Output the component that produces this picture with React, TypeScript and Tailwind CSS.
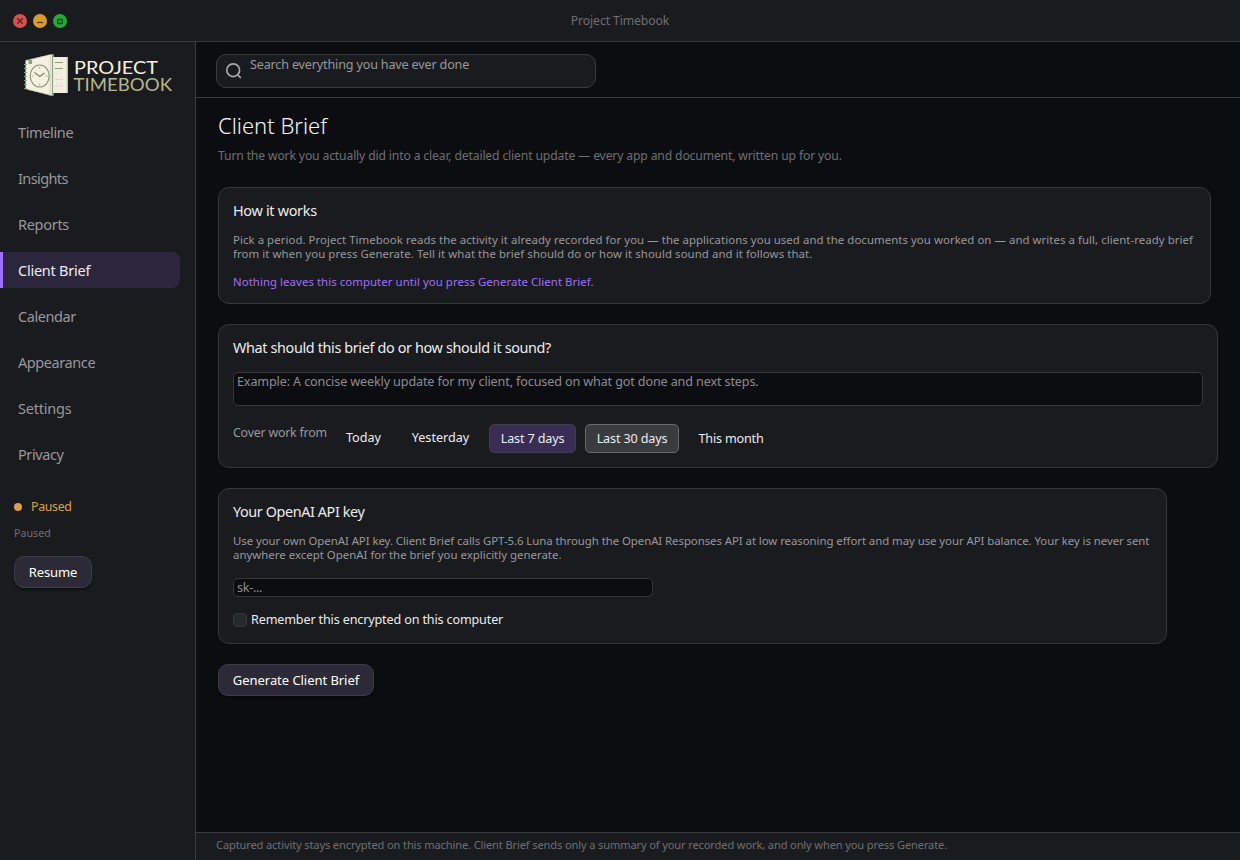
import { useState } from 'react';
import clsx from 'clsx';

interface NavItem {
  label: string;
  tracking: string;
}

const navItems: NavItem[] = [
  { label: 'Timeline', tracking: 'tracking-[-0.36px]' },
  { label: 'Insights', tracking: 'tracking-[-0.6px]' },
  { label: 'Reports', tracking: 'tracking-[-0.3px]' },
  { label: 'Client Brief', tracking: 'tracking-[-0.24px]' },
  { label: 'Calendar', tracking: 'tracking-[-0.42px]' },
  { label: 'Appearance', tracking: 'tracking-[-0.42px]' },
  { label: 'Settings', tracking: 'tracking-[-0.22px]' },
  { label: 'Privacy', tracking: 'tracking-[-0.4px]' }
];

function WindowControls() {
  return (
    <svg width="60" height="16" viewBox="0 0 60 16" className="ml-3">
      <circle cx="8" cy="8" r="7" fill="#d6504d" />
      <path d="M5.3 5.3l5.4 5.4M10.7 5.3l-5.4 5.4" stroke="#55292c" strokeWidth="1.5" />
      <circle cx="28" cy="8" r="7" fill="#d79c2c" />
      <path d="M25 9.5h6" stroke="#5a4420" strokeWidth="1.3" />
      <circle cx="48" cy="8" r="7" fill="#26a83a" />
      <rect x="45.7" y="6.5" width="4.6" height="4" rx="0.6" fill="none" stroke="#174a22" strokeWidth="1.3" />
    </svg>
  );
}

function Logo() {
  return (
    <svg width="150" height="44" viewBox="0 0 150 44" className="mt-[11px] ml-[24px]">
      {/* back pages */}
      <path d="M29 4h15v36H29z" fill="#f4eee0" />
      <path d="M43.3 4v36" stroke="#a3af8d" strokeWidth="1" />
      <path d="M31 9.5h8M31 15.5h8" stroke="#8ba07a" strokeWidth="1.2" />
      <path d="M31 26.5h8M31 33h8" stroke="#d9d8c0" strokeWidth="1" />
      <path d="M32 21h1M36 19h1M32 30h1M36 30h1" stroke="#dcdac6" strokeWidth="1" />
      {/* cover */}
      <path d="M1.5 7.5L26 1.5h3.5v41H27L1.5 36z" fill="#f6f0e2" />
      <path d="M1.5 7.5L27 1.5M27 42.5L1.5 36" stroke="#a9b392" strokeWidth="0.8" strokeDasharray="3 2" />
      <path d="M26.2 2v40" stroke="#c9cbb0" strokeWidth="0.8" />
      <path d="M28.5 1v42" stroke="#8ca27b" strokeWidth="1.2" />
      <path d="M4.5 7h3.5v4H4.5z" fill="#8ca27b" />
      <path d="M0 11.5h3M0 15.5h3M0 19.5h3M0 23.5h3M0 27.5h3M0 31.5h3M0 35.5h3" stroke="#94a583" strokeWidth="1.1" />
      {/* clock */}
      <ellipse cx="15.7" cy="23" rx="9.5" ry="11" fill="none" stroke="#87997a" strokeWidth="1.2" />
      <path d="M10.5 19.5l5.3 4L20.5 20" fill="none" stroke="#75896a" strokeWidth="1.1" />
      <path d="M15.7 14v2M15.7 30.5v2M8 23h1.5M22 23h1.5" stroke="#a3b093" strokeWidth="1" />
      <text x="50" y="21" textLength="84" lengthAdjust="spacingAndGlyphs" className="font-['Lato',sans-serif] text-[18px]" fill="#f6f0e2">
        PROJECT
      </text>
      <text x="49.5" y="38" textLength="98.5" lengthAdjust="spacingAndGlyphs" className="font-['Lato',sans-serif] text-[18px]" fill="#b3b78f">
        TIMEBOOK
      </text>
    </svg>
  );
}

function Sidebar() {
  const [active, setActive] = useState('Client Brief');

  return (
    <aside className="flex w-[196px] shrink-0 flex-col border-r border-[#3a3b3e] bg-[#1a1b1e]">
      <Logo />
      <nav className="mt-[17px] flex flex-col gap-2.5">
        {navItems.map((item) => (
          <button
            key={item.label}
            onClick={() => setActive(item.label)}
            className={clsx(
              'h-9 w-[180px] border-l-[3px] pl-[15px] text-left text-[14.5px] leading-[37px]',
              item.tracking,
              item.label === active
                ? 'rounded-r-lg border-[#a06fff] bg-[#2c263c] text-[#ececf0]'
                : 'border-transparent text-[#98989d]'
            )}
          >
            {item.label}
          </button>
        ))}
      </nav>
      <div className="mt-[25px] ml-3.5 flex h-5 items-center gap-[9px] text-[12.4px] tracking-[-0.35px] text-[#dba04a]">
        <span className="h-2 w-2 rounded-full bg-[#dba04a]" />
        Paused
      </div>
      <p className="mt-2 ml-3.5 text-[10.7px] leading-[16px] text-[#6e6f73]">Paused</p>
      <button className="mt-[15px] ml-3.5 h-8 w-[78px] rounded-[10px] border border-[#3e3d47] bg-[#2b2a36] pt-0.5 text-[13px] tracking-[-0.15px] text-white shadow-[0_2px_2px_rgba(0,0,0,0.4)]">
        Resume
      </button>
    </aside>
  );
}

function SearchBar() {
  return (
    <div className="flex h-14 shrink-0 items-center border-b border-[#3a3b3e] pt-0.5 pl-5">
      <div className="flex h-[34px] w-[380px] items-start rounded-[10px] border border-[#3a3b3e] bg-[#1a1b1e] pl-2">
        <svg width="18" height="18" viewBox="0 0 18 18" className="mt-[7px]" fill="none" stroke="#a6a6ab" strokeWidth="1.7">
          <circle cx="8.2" cy="8.2" r="6.4" />
          <path d="M12.8 12.8l3 3" />
        </svg>
        <span className="ml-[7px] text-[12.6px] leading-[20px] tracking-[-0.17px] text-[#98989d]">Search everything you have ever done</span>
      </div>
    </div>
  );
}

interface PeriodOption {
  label: string;
  className: string;
}

const periods: PeriodOption[] = [
  { label: 'Today', className: 'mt-px w-[59px] h-[27px] border-transparent' },
  { label: 'Yesterday', className: 'mt-px ml-[7px] w-[81px] h-[27px] border-transparent' },
  { label: 'Last 7 days', className: 'ml-[8px] w-[87px] h-[29px] pt-0.5 tracking-[-0.15px] border-[#413c4f] bg-[#392d55]' },
  { label: 'Last 30 days', className: 'ml-[9px] w-[94px] h-[29px] pt-0.5 tracking-[-0.15px] border-[#696b6f] bg-[#393b3f]' },
  { label: 'This month', className: 'ml-[8px] w-[88px] h-[29px] pt-0.5 tracking-[-0.18px] border-transparent' }
];

function HowItWorks() {
  return (
    <section className="mt-[21px] h-[117px] w-[993px] rounded-[11px] border border-[#36373a] bg-[#1a1b1e] px-3.5">
      <h2 className="mt-3 text-[14.4px] leading-[22px] tracking-[-0.3px] text-[#ececf0]">How it works</h2>
      <p className="mt-[11px] text-[11.4px] leading-[14px] tracking-[0.06px] whitespace-nowrap text-[#98989d]">
        Pick a period. Project Timebook reads the activity it already recorded for you — the applications you used and the documents you worked on — and writes a full, client-ready brief
        <br />
        <span className="tracking-[0.075px]">from it when you press Generate. Tell it what the brief should do or how it should sound and it follows that.</span>
      </p>
      <p className="mt-3.5 text-[11.4px] leading-[14px] tracking-[0.06px] text-[#a06fff]">
        Nothing leaves this computer until you press Generate Client Brief.
      </p>
    </section>
  );
}

function BriefOptions() {
  return (
    <section className="mt-5 h-[144px] w-[1000px] rounded-[11px] border border-[#36373a] bg-[#1a1b1e] px-3.5">
      <h2 className="mt-3 text-[14.4px] leading-[22px] tracking-[-0.36px] text-[#ececf0]">
        What should this brief do or how should it sound?
      </h2>
      <div className="mt-[13px] h-[34px] rounded-[5px] border border-[#36373a] bg-[#0c0d11] pl-[3px] text-[12.6px] leading-[18px] tracking-[-0.13px] text-[#8c8c91]">
        Example: A concise weekly update for my client, focused on what got done and next steps.
      </div>
      <div className="mt-[18px] flex items-start">
        <span className="w-[101px] text-[12.4px] leading-[18px] tracking-[-0.22px] text-[#98989d]">Cover work from</span>
        {periods.map((period) => (
          <button
            key={period.label}
            className={clsx('rounded-[5px] border text-[12.6px] whitespace-nowrap text-[#ececf0]', period.className)}
          >
            {period.label}
          </button>
        ))}
      </div>
    </section>
  );
}

function ApiKey() {
  return (
    <section className="mt-5 h-[156px] w-[949px] rounded-[11px] border border-[#36373a] bg-[#1a1b1e] px-3.5">
      <h2 className="mt-3 text-[14.4px] leading-[22px] tracking-[-0.4px] text-[#ececf0]">Your OpenAI API key</h2>
      <p className="mt-[11px] text-[11.4px] leading-[14px] tracking-[-0.051px] whitespace-nowrap text-[#98989d]">
        Use your own OpenAI API key. Client Brief calls GPT-5.6 Luna through the OpenAI Responses API at low reasoning effort and may use your API balance. Your key is never sent
        <br />
        <span className="tracking-[0.02px]">anywhere except OpenAI for the brief you explicitly generate.</span>
      </p>
      <div className="mt-4 h-[19px] w-[420px] rounded-[5px] border border-[#36373a] bg-[#0c0d11] pl-[3px] text-[12.6px] leading-[18px] tracking-[-0.3px] text-[#8c8c91]">
        sk-...
      </div>
      <label className="mt-[13px] flex items-center gap-1 text-[12.6px] leading-[20px] tracking-[-0.15px] text-[#ececf0]">
        <span className="h-3.5 w-3.5 rounded-[4px] border border-[#36373a] bg-[#25282c]" />
        Remember this encrypted on this computer
      </label>
    </section>
  );
}

export default function App() {
  return (
    <div className="flex h-[860px] w-[1240px] flex-col overflow-hidden bg-[#0c0d11] font-['Noto_Sans','Open_Sans',sans-serif]">
      <header className="flex h-[42px] shrink-0 items-center border-b border-[#3a3b3e] bg-[#1a1b1e]">
        <WindowControls />
        <div className="flex-1 pt-0.5 pr-[72px] text-center text-[12.2px] tracking-[-0.1px] text-[#6e6f73]">Project Timebook</div>
      </header>
      <div className="flex min-h-0 flex-1">
        <Sidebar />
        <div className="flex min-w-0 flex-1 flex-col">
          <SearchBar />
          <main className="flex-1 pl-[22px]">
            <h1 className="mt-[11px] text-[22px] leading-[32px] font-light text-[#f4f4f7]">Client Brief</h1>
            <p className="mt-[5px] text-[12.2px] leading-[20px] tracking-[-0.16px] text-[#6e6f73]">
              Turn the work you actually did into a clear, detailed client update — every app and document, written up for you.
            </p>
            <HowItWorks />
            <BriefOptions />
            <ApiKey />
            <button className="mt-5 h-8 w-[156px] rounded-[10px] border border-[#3e3d47] bg-[#2b2a36] pt-0.5 text-[13px] tracking-[-0.05px] text-white shadow-[0_2px_2px_rgba(0,0,0,0.4)]">
              Generate Client Brief
            </button>
          </main>
          <footer className="h-7 shrink-0 border-t border-[#3a3b3e] bg-[#1a1b1e] pl-5 text-[11.1px] leading-[24px] tracking-[-0.135px] text-[#6e6f73]">
            Captured activity stays encrypted on this machine. Client Brief sends only a summary of your recorded work, and only when you press Generate.
          </footer>
        </div>
      </div>
    </div>
  );
}
